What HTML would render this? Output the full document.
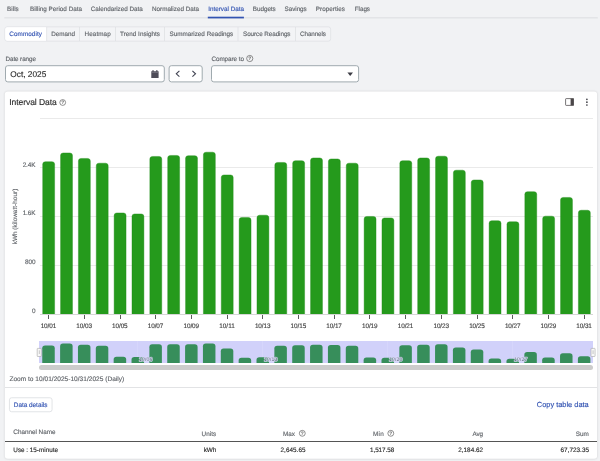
<!DOCTYPE html>
<html><head><meta charset="utf-8"><title>Interval Data</title>
<style>
html,body{margin:0;padding:0;}
body{text-rendering:geometricPrecision;width:600px;height:461px;overflow:hidden;background:#f1f2f4;position:relative;font-family:"Liberation Sans",sans-serif;}
.a{position:absolute;display:block;}
</style></head><body>
<svg class="a" style="left:0;top:0" width="600" height="22" viewBox="0 0 600 22"><rect x="4.3" y="17.1" width="593.5" height="1.4" fill="#e2e3e6"/><rect x="207.8" y="16.7" width="36.1" height="1.7" fill="#3253b2"/></svg>
<svg class="a" style="left:0;top:0" width="600" height="50" viewBox="0 0 600 50"><rect x="4.85" y="26.85" width="325.8" height="14.3" rx="2.3" fill="#f3f4f6" stroke="#dcdee2" stroke-width="0.7"/><path d="M46.75 27.2 H7.2 a2 2 0 0 0 -2 2 V38.8 a2 2 0 0 0 2 2 H46.75 z" fill="#fff"/><rect x="46.40" y="27.0" width="0.7" height="14.0" fill="#dcdee2"/><rect x="79.15" y="27.0" width="0.7" height="14.0" fill="#dcdee2"/><rect x="115.15" y="27.0" width="0.7" height="14.0" fill="#dcdee2"/><rect x="164.15" y="27.0" width="0.7" height="14.0" fill="#dcdee2"/><rect x="237.65" y="27.0" width="0.7" height="14.0" fill="#dcdee2"/><rect x="295.15" y="27.0" width="0.7" height="14.0" fill="#dcdee2"/></svg>
<svg class="a" style="left:0;top:0" width="600" height="90" viewBox="0 0 600 90"><rect x="5.50" y="65.70" width="158.80" height="16.20" rx="2.3" fill="#fff" stroke="#a0aaaf" stroke-width="1.0"/></svg>
<svg class="a" style="left:151.3px;top:69.5px" width="7.9" height="8.6" viewBox="0 0 8 8.6" preserveAspectRatio="none"><path d="M0.3 1.2 h7.4 v6.9 a0.4 0.4 0 0 1 -0.4 0.4 h-6.6 a0.4 0.4 0 0 1 -0.4 -0.4 z" fill="#4e4c58"/><rect x="1.5" y="0" width="1.1" height="2" fill="#4e4c58"/><rect x="5.4" y="0" width="1.1" height="2" fill="#4e4c58"/><rect x="0.3" y="2.4" width="7.4" height="0.5" fill="#8e8c98"/></svg>
<svg class="a" style="left:0;top:0" width="600" height="90" viewBox="0 0 600 90"><rect x="169.10" y="65.70" width="33.10" height="16.20" rx="2.3" fill="#fff" stroke="#a0aaaf" stroke-width="1.0"/></svg>
<svg class="a" style="left:174px;top:69px" width="24" height="10" viewBox="0 0 24 10"><path d="M5.4 1.9 L2.3 4.8 L5.4 7.7" fill="none" stroke="#3e4150" stroke-width="1.1"/><path d="M18.4 1.9 L21.5 4.8 L18.4 7.7" fill="none" stroke="#3e4150" stroke-width="1.1"/></svg>
<svg class="a" style="left:0;top:0" width="600" height="90" viewBox="0 0 600 90"><rect x="211.50" y="65.70" width="147.10" height="16.20" rx="2.3" fill="#fff" stroke="#a0aaaf" stroke-width="1.0"/></svg>
<svg class="a" style="left:347.2px;top:71.8px" width="6.4" height="4.4" viewBox="0 0 6.4 4.4"><path d="M0.4 0.4 h5.6 l-2.8 3.5 z" fill="#3c3c44"/></svg>
<svg class="a" style="left:0;top:0" width="600" height="461" viewBox="0 0 600 461"><defs><filter id="sh" x="-5%" y="-5%" width="110%" height="110%"><feGaussianBlur stdDeviation="1.3"/></filter></defs><rect x="4.8" y="91.6" width="592.3" height="367.3" rx="3" fill="#000" opacity="0.14" filter="url(#sh)"/><rect x="4.8" y="91.5" width="592.3" height="367.3" rx="3" fill="#fff"/></svg>
<svg class="a" style="left:565px;top:98px" width="9.4" height="8" viewBox="0 0 9.4 8"><rect x="0.6" y="0.6" width="8.2" height="6.8" rx="0.6" fill="none" stroke="#4a4648" stroke-width="0.75"/><rect x="5.6" y="0.6" width="3.2" height="6.8" fill="#4a4648"/></svg>
<svg class="a" style="left:580px;top:95px" width="14" height="14" viewBox="580 95 14 14"><circle cx="586.9" cy="99.3" r="0.85" fill="#3f3f46"/><circle cx="586.9" cy="102.15" r="0.85" fill="#3f3f46"/><circle cx="586.9" cy="105.0" r="0.85" fill="#3f3f46"/></svg>
<div class="a" style="left:39.6px;top:313.80px;width:553.60px;height:0.8px;background:#d6d6d6"></div>
<div class="a" style="left:39.6px;top:264.87px;width:553.60px;height:0.8px;background:#eaeaea"></div>
<div class="a" style="left:39.6px;top:215.94px;width:553.60px;height:0.8px;background:#eaeaea"></div>
<div class="a" style="left:39.6px;top:167.01px;width:553.60px;height:0.8px;background:#eaeaea"></div>
<div class="a" style="left:39.6px;top:118.08px;width:553.60px;height:0.8px;background:#eaeaea"></div>
<svg class="a" style="left:0;top:0" width="600" height="314.20" viewBox="0 0 600 314.20"><rect x="42.70" y="161.70" width="11.9" height="154.95" rx="2.6" fill="#259a1c" stroke="#1f8a17" stroke-width="0.4"/><rect x="60.56" y="152.95" width="11.9" height="163.70" rx="2.6" fill="#259a1c" stroke="#1f8a17" stroke-width="0.4"/><rect x="78.41" y="158.45" width="11.9" height="158.20" rx="2.6" fill="#259a1c" stroke="#1f8a17" stroke-width="0.4"/><rect x="96.27" y="163.20" width="11.9" height="153.45" rx="2.6" fill="#259a1c" stroke="#1f8a17" stroke-width="0.4"/><rect x="114.13" y="212.95" width="11.9" height="103.70" rx="2.6" fill="#259a1c" stroke="#1f8a17" stroke-width="0.4"/><rect x="131.99" y="213.95" width="11.9" height="102.70" rx="2.6" fill="#259a1c" stroke="#1f8a17" stroke-width="0.4"/><rect x="149.84" y="156.45" width="11.9" height="160.20" rx="2.6" fill="#259a1c" stroke="#1f8a17" stroke-width="0.4"/><rect x="167.70" y="155.45" width="11.9" height="161.20" rx="2.6" fill="#259a1c" stroke="#1f8a17" stroke-width="0.4"/><rect x="185.56" y="155.70" width="11.9" height="160.95" rx="2.6" fill="#259a1c" stroke="#1f8a17" stroke-width="0.4"/><rect x="203.41" y="152.20" width="11.9" height="164.45" rx="2.6" fill="#259a1c" stroke="#1f8a17" stroke-width="0.4"/><rect x="221.27" y="174.95" width="11.9" height="141.70" rx="2.6" fill="#259a1c" stroke="#1f8a17" stroke-width="0.4"/><rect x="239.13" y="217.45" width="11.9" height="99.20" rx="2.6" fill="#259a1c" stroke="#1f8a17" stroke-width="0.4"/><rect x="256.98" y="215.20" width="11.9" height="101.45" rx="2.6" fill="#259a1c" stroke="#1f8a17" stroke-width="0.4"/><rect x="274.84" y="162.45" width="11.9" height="154.20" rx="2.6" fill="#259a1c" stroke="#1f8a17" stroke-width="0.4"/><rect x="292.70" y="160.70" width="11.9" height="155.95" rx="2.6" fill="#259a1c" stroke="#1f8a17" stroke-width="0.4"/><rect x="310.56" y="157.95" width="11.9" height="158.70" rx="2.6" fill="#259a1c" stroke="#1f8a17" stroke-width="0.4"/><rect x="328.41" y="158.95" width="11.9" height="157.70" rx="2.6" fill="#259a1c" stroke="#1f8a17" stroke-width="0.4"/><rect x="346.27" y="163.20" width="11.9" height="153.45" rx="2.6" fill="#259a1c" stroke="#1f8a17" stroke-width="0.4"/><rect x="364.13" y="216.45" width="11.9" height="100.20" rx="2.6" fill="#259a1c" stroke="#1f8a17" stroke-width="0.4"/><rect x="381.98" y="217.95" width="11.9" height="98.70" rx="2.6" fill="#259a1c" stroke="#1f8a17" stroke-width="0.4"/><rect x="399.84" y="160.70" width="11.9" height="155.95" rx="2.6" fill="#259a1c" stroke="#1f8a17" stroke-width="0.4"/><rect x="417.70" y="157.95" width="11.9" height="158.70" rx="2.6" fill="#259a1c" stroke="#1f8a17" stroke-width="0.4"/><rect x="435.55" y="156.20" width="11.9" height="160.45" rx="2.6" fill="#259a1c" stroke="#1f8a17" stroke-width="0.4"/><rect x="453.41" y="170.20" width="11.9" height="146.45" rx="2.6" fill="#259a1c" stroke="#1f8a17" stroke-width="0.4"/><rect x="471.27" y="179.95" width="11.9" height="136.70" rx="2.6" fill="#259a1c" stroke="#1f8a17" stroke-width="0.4"/><rect x="489.12" y="220.70" width="11.9" height="95.95" rx="2.6" fill="#259a1c" stroke="#1f8a17" stroke-width="0.4"/><rect x="506.98" y="221.75" width="11.9" height="94.90" rx="2.6" fill="#259a1c" stroke="#1f8a17" stroke-width="0.4"/><rect x="524.84" y="191.65" width="11.9" height="125.00" rx="2.6" fill="#259a1c" stroke="#1f8a17" stroke-width="0.4"/><rect x="542.70" y="216.15" width="11.9" height="100.50" rx="2.6" fill="#259a1c" stroke="#1f8a17" stroke-width="0.4"/><rect x="560.55" y="197.45" width="11.9" height="119.20" rx="2.6" fill="#259a1c" stroke="#1f8a17" stroke-width="0.4"/><rect x="578.41" y="210.25" width="11.9" height="106.40" rx="2.6" fill="#259a1c" stroke="#1f8a17" stroke-width="0.4"/></svg>
<div class="a" style="left:48.10px;top:315px;width:0.8px;height:4.2px;background:#5c5c5c"></div>
<div class="a" style="left:83.81px;top:315px;width:0.8px;height:4.2px;background:#5c5c5c"></div>
<div class="a" style="left:119.52px;top:315px;width:0.8px;height:4.2px;background:#5c5c5c"></div>
<div class="a" style="left:155.23px;top:315px;width:0.8px;height:4.2px;background:#5c5c5c"></div>
<div class="a" style="left:190.94px;top:315px;width:0.8px;height:4.2px;background:#5c5c5c"></div>
<div class="a" style="left:226.65px;top:315px;width:0.8px;height:4.2px;background:#5c5c5c"></div>
<div class="a" style="left:262.36px;top:315px;width:0.8px;height:4.2px;background:#5c5c5c"></div>
<div class="a" style="left:298.07px;top:315px;width:0.8px;height:4.2px;background:#5c5c5c"></div>
<div class="a" style="left:333.78px;top:315px;width:0.8px;height:4.2px;background:#5c5c5c"></div>
<div class="a" style="left:369.49px;top:315px;width:0.8px;height:4.2px;background:#5c5c5c"></div>
<div class="a" style="left:405.20px;top:315px;width:0.8px;height:4.2px;background:#5c5c5c"></div>
<div class="a" style="left:440.91px;top:315px;width:0.8px;height:4.2px;background:#5c5c5c"></div>
<div class="a" style="left:476.62px;top:315px;width:0.8px;height:4.2px;background:#5c5c5c"></div>
<div class="a" style="left:512.33px;top:315px;width:0.8px;height:4.2px;background:#5c5c5c"></div>
<div class="a" style="left:548.04px;top:315px;width:0.8px;height:4.2px;background:#5c5c5c"></div>
<div class="a" style="left:583.75px;top:315px;width:0.8px;height:4.2px;background:#5c5c5c"></div>
<div class="a" style="left:39.2px;top:341px;width:553.60px;height:22px;background:#d1d1fa"></div>
<svg class="a" style="left:0;top:0" width="600" height="363" viewBox="0 0 600 363"><rect x="137.47" y="341" width="0.5" height="22" fill="#dadafc"/><rect x="262.46" y="341" width="0.5" height="22" fill="#dadafc"/><rect x="387.44" y="341" width="0.5" height="22" fill="#dadafc"/><rect x="512.43" y="341" width="0.5" height="22" fill="#dadafc"/><rect x="42.25" y="345.52" width="12.5" height="20.48" rx="2.8" fill="#378e5b"/><rect x="60.11" y="343.60" width="12.5" height="22.40" rx="2.8" fill="#378e5b"/><rect x="77.96" y="344.81" width="12.5" height="21.19" rx="2.8" fill="#378e5b"/><rect x="95.81" y="345.85" width="12.5" height="20.15" rx="2.8" fill="#378e5b"/><rect x="113.67" y="356.77" width="12.5" height="9.23" rx="2.8" fill="#378e5b"/><rect x="131.53" y="356.99" width="12.5" height="9.01" rx="2.8" fill="#378e5b"/><rect x="149.38" y="344.37" width="12.5" height="21.63" rx="2.8" fill="#378e5b"/><rect x="167.24" y="344.15" width="12.5" height="21.85" rx="2.8" fill="#378e5b"/><rect x="185.09" y="344.20" width="12.5" height="21.80" rx="2.8" fill="#378e5b"/><rect x="202.94" y="343.43" width="12.5" height="22.57" rx="2.8" fill="#378e5b"/><rect x="220.80" y="348.43" width="12.5" height="17.57" rx="2.8" fill="#378e5b"/><rect x="238.66" y="357.76" width="12.5" height="8.24" rx="2.8" fill="#378e5b"/><rect x="256.51" y="357.26" width="12.5" height="8.74" rx="2.8" fill="#378e5b"/><rect x="274.37" y="345.68" width="12.5" height="20.32" rx="2.8" fill="#378e5b"/><rect x="292.22" y="345.30" width="12.5" height="20.70" rx="2.8" fill="#378e5b"/><rect x="310.07" y="344.70" width="12.5" height="21.30" rx="2.8" fill="#378e5b"/><rect x="327.93" y="344.92" width="12.5" height="21.08" rx="2.8" fill="#378e5b"/><rect x="345.79" y="345.85" width="12.5" height="20.15" rx="2.8" fill="#378e5b"/><rect x="363.64" y="357.54" width="12.5" height="8.46" rx="2.8" fill="#378e5b"/><rect x="381.50" y="357.87" width="12.5" height="8.13" rx="2.8" fill="#378e5b"/><rect x="399.35" y="345.30" width="12.5" height="20.70" rx="2.8" fill="#378e5b"/><rect x="417.20" y="344.70" width="12.5" height="21.30" rx="2.8" fill="#378e5b"/><rect x="435.06" y="344.31" width="12.5" height="21.69" rx="2.8" fill="#378e5b"/><rect x="452.92" y="347.38" width="12.5" height="18.62" rx="2.8" fill="#378e5b"/><rect x="470.77" y="349.52" width="12.5" height="16.48" rx="2.8" fill="#378e5b"/><rect x="488.62" y="358.47" width="12.5" height="7.53" rx="2.8" fill="#378e5b"/><rect x="506.48" y="358.70" width="12.5" height="7.30" rx="2.8" fill="#378e5b"/><rect x="524.34" y="352.09" width="12.5" height="13.91" rx="2.8" fill="#378e5b"/><rect x="542.19" y="357.47" width="12.5" height="8.53" rx="2.8" fill="#378e5b"/><rect x="560.04" y="353.37" width="12.5" height="12.63" rx="2.8" fill="#378e5b"/><rect x="577.90" y="356.18" width="12.5" height="9.82" rx="2.8" fill="#378e5b"/></svg>
<div class="a" style="left:39.2px;top:365px;width:553.60px;height:5px;border-radius:2.5px;background:#cccccc"></div>
<svg class="a" style="left:0;top:0" width="600" height="360" viewBox="0 0 600 360"><rect x="37.20" y="348.4" width="4.1" height="8.1" rx="0.5" fill="#f8f8f8" stroke="#a6a6a6" stroke-width="0.6"/><rect x="38.85" y="350.3" width="0.8" height="3.7" fill="#b8b8b8"/><rect x="591.00" y="348.4" width="4.1" height="8.1" rx="0.5" fill="#f8f8f8" stroke="#a6a6a6" stroke-width="0.6"/><rect x="592.65" y="350.3" width="0.8" height="3.7" fill="#b8b8b8"/></svg>
<div class="a" style="left:5px;top:387.3px;width:592px;height:0.8px;background:#e2e3e5"></div>
<svg class="a" style="left:0;top:390px" width="100" height="30" viewBox="0 390 100 30"><rect x="9.45" y="397.75" width="42.6" height="14" rx="2.2" fill="#fff" stroke="#d6d9dd" stroke-width="0.7"/></svg>
<div class="a" style="left:5px;top:441px;width:592px;height:1px;background:#555"></div>
<svg class="a" style="left:0;top:0;will-change:transform" width="600" height="461" viewBox="0 0 600 461" font-family="Liberation Sans, sans-serif" text-rendering="geometricPrecision" stroke-width="0.14">
<text x="7.00" y="11.10" font-size="6.32" fill="#5f6368" stroke="#5f6368" textLength="11.75" lengthAdjust="spacing">Bills</text>
<text x="30.00" y="11.10" font-size="6.32" fill="#5f6368" stroke="#5f6368" textLength="52.00" lengthAdjust="spacing">Billing Period Data</text>
<text x="90.75" y="11.10" font-size="6.32" fill="#5f6368" stroke="#5f6368" textLength="52.00" lengthAdjust="spacing">Calendarized Data</text>
<text x="152.00" y="11.10" font-size="6.32" fill="#5f6368" stroke="#5f6368" textLength="47.00" lengthAdjust="spacing">Normalized Data</text>
<text x="208.20" y="11.10" font-size="6.32" fill="#3253b2" stroke="#3253b2" textLength="35.80" lengthAdjust="spacing">Interval Data</text>
<text x="252.75" y="11.10" font-size="6.32" fill="#5f6368" stroke="#5f6368" textLength="23.00" lengthAdjust="spacing">Budgets</text>
<text x="284.50" y="11.10" font-size="6.32" fill="#5f6368" stroke="#5f6368" textLength="22.25" lengthAdjust="spacing">Savings</text>
<text x="315.75" y="11.10" font-size="6.32" fill="#5f6368" stroke="#5f6368" textLength="29.25" lengthAdjust="spacing">Properties</text>
<text x="354.75" y="11.10" font-size="6.32" fill="#5f6368" stroke="#5f6368" textLength="15.25" lengthAdjust="spacing">Flags</text>
<text x="9.25" y="36.20" font-size="6.32" fill="#3253b2" stroke="#3253b2" textLength="32.75" lengthAdjust="spacing">Commodity</text>
<text x="51.25" y="36.20" font-size="6.32" fill="#5f6368" stroke="#5f6368" textLength="23.75" lengthAdjust="spacing">Demand</text>
<text x="84.50" y="36.20" font-size="6.32" fill="#5f6368" stroke="#5f6368" textLength="26.25" lengthAdjust="spacing">Heatmap</text>
<text x="120.00" y="36.20" font-size="6.32" fill="#5f6368" stroke="#5f6368" textLength="40.00" lengthAdjust="spacing">Trend Insights</text>
<text x="169.50" y="36.20" font-size="6.32" fill="#5f6368" stroke="#5f6368" textLength="63.75" lengthAdjust="spacing">Summarized Readings</text>
<text x="243.00" y="36.20" font-size="6.32" fill="#5f6368" stroke="#5f6368" textLength="47.50" lengthAdjust="spacing">Source Readings</text>
<text x="300.00" y="36.20" font-size="6.32" fill="#5f6368" stroke="#5f6368" textLength="26.00" lengthAdjust="spacing">Channels</text>
<text x="5.50" y="61.00" font-size="6.30" fill="#5f6368" stroke="#5f6368" textLength="30.40" lengthAdjust="spacing">Date range</text>
<text x="10.30" y="76.60" font-size="8.30" fill="#2b2b2b" stroke="#2b2b2b">Oct, 2025</text>
<text x="211.40" y="61.00" font-size="6.30" fill="#5f6368" stroke="#5f6368" textLength="32.60" lengthAdjust="spacing">Compare to</text>
<circle cx="249.75" cy="58.50" r="3.10" fill="none" stroke="#6b6b6b" stroke-width="0.75"/><text x="249.75" y="60.25" font-size="4.9" font-weight="bold" fill="#6b6b6b" stroke="none" text-anchor="middle">?</text>
<text x="9.30" y="105.20" font-size="8.55" fill="#2b2b2b" stroke="#2b2b2b" textLength="47.40" lengthAdjust="spacing">Interval Data</text>
<circle cx="62.70" cy="102.50" r="2.90" fill="none" stroke="#6b6b6b" stroke-width="0.75"/><text x="62.70" y="104.25" font-size="4.9" font-weight="bold" fill="#6b6b6b" stroke="none" text-anchor="middle">?</text>
<text x="32.02" y="313.00" font-size="6.40" fill="#5f6368" stroke="#5f6368">0</text>
<text x="25.07" y="264.00" font-size="6.40" fill="#5f6368" stroke="#5f6368" textLength="10.43" lengthAdjust="spacing">800</text>
<text x="22.64" y="215.00" font-size="6.40" fill="#5f6368" stroke="#5f6368" textLength="12.86" lengthAdjust="spacing">1.6K</text>
<text x="22.64" y="167.00" font-size="6.40" fill="#5f6368" stroke="#5f6368" textLength="12.86" lengthAdjust="spacing">2.4K</text>
<text x="40.65" y="328.00" font-size="6.40" fill="#444" stroke="#444" textLength="15.60" lengthAdjust="spacing">10/01</text>
<text x="76.36" y="328.00" font-size="6.40" fill="#444" stroke="#444" textLength="15.60" lengthAdjust="spacing">10/03</text>
<text x="112.07" y="328.00" font-size="6.40" fill="#444" stroke="#444" textLength="15.60" lengthAdjust="spacing">10/05</text>
<text x="147.78" y="328.00" font-size="6.40" fill="#444" stroke="#444" textLength="15.60" lengthAdjust="spacing">10/07</text>
<text x="183.49" y="328.00" font-size="6.40" fill="#444" stroke="#444" textLength="15.60" lengthAdjust="spacing">10/09</text>
<text x="219.20" y="328.00" font-size="6.40" fill="#444" stroke="#444" textLength="15.60" lengthAdjust="spacing">10/11</text>
<text x="254.91" y="328.00" font-size="6.40" fill="#444" stroke="#444" textLength="15.60" lengthAdjust="spacing">10/13</text>
<text x="290.62" y="328.00" font-size="6.40" fill="#444" stroke="#444" textLength="15.60" lengthAdjust="spacing">10/15</text>
<text x="326.33" y="328.00" font-size="6.40" fill="#444" stroke="#444" textLength="15.60" lengthAdjust="spacing">10/17</text>
<text x="362.04" y="328.00" font-size="6.40" fill="#444" stroke="#444" textLength="15.60" lengthAdjust="spacing">10/19</text>
<text x="397.75" y="328.00" font-size="6.40" fill="#444" stroke="#444" textLength="15.60" lengthAdjust="spacing">10/21</text>
<text x="433.46" y="328.00" font-size="6.40" fill="#444" stroke="#444" textLength="15.60" lengthAdjust="spacing">10/23</text>
<text x="469.17" y="328.00" font-size="6.40" fill="#444" stroke="#444" textLength="15.60" lengthAdjust="spacing">10/25</text>
<text x="504.88" y="328.00" font-size="6.40" fill="#444" stroke="#444" textLength="15.60" lengthAdjust="spacing">10/27</text>
<text x="540.59" y="328.00" font-size="6.40" fill="#444" stroke="#444" textLength="15.60" lengthAdjust="spacing">10/29</text>
<text x="576.30" y="328.00" font-size="6.40" fill="#444" stroke="#444" textLength="15.60" lengthAdjust="spacing">10/31</text>
<text x="0" y="0" font-size="6.3" fill="#5f6368" stroke="#5f6368" text-anchor="middle" textLength="55.6" lengthAdjust="spacing" transform="translate(17.3,216.5) rotate(-90)">kWh (kilowatt-hour)</text>
<text x="139.12" y="361.3" font-size="5.2" textLength="13.2" lengthAdjust="spacing" fill="#5a5f74" stroke="#dedefa" stroke-width="1.3" stroke-linejoin="round" paint-order="stroke" opacity="0.9">10/06</text>
<text x="264.11" y="361.3" font-size="5.2" textLength="13.2" lengthAdjust="spacing" fill="#5a5f74" stroke="#dedefa" stroke-width="1.3" stroke-linejoin="round" paint-order="stroke" opacity="0.9">10/13</text>
<text x="389.09" y="361.3" font-size="5.2" textLength="13.2" lengthAdjust="spacing" fill="#5a5f74" stroke="#dedefa" stroke-width="1.3" stroke-linejoin="round" paint-order="stroke" opacity="0.9">10/20</text>
<text x="514.08" y="361.3" font-size="5.2" textLength="13.2" lengthAdjust="spacing" fill="#5a5f74" stroke="#dedefa" stroke-width="1.3" stroke-linejoin="round" paint-order="stroke" opacity="0.9">10/27</text>
<text x="9.40" y="381.00" font-size="6.59" fill="#5f6368" stroke="#5f6368">Zoom to 10/01/2025-10/31/2025 (Daily)</text>
<text x="13.80" y="406.70" font-size="6.38" fill="#3253b2" stroke="#3253b2">Data details</text>
<text x="536.80" y="407.20" font-size="7.42" fill="#3253b2" stroke="#3253b2">Copy table data</text>
<text x="13.30" y="433.80" font-size="6.35" fill="#5f6368" stroke="#5f6368" textLength="42.20" lengthAdjust="spacing">Channel Name</text>
<text x="201.50" y="435.50" font-size="6.35" fill="#5f6368" stroke="#5f6368" textLength="14.70" lengthAdjust="spacing">Units</text>
<text x="283.00" y="435.50" font-size="6.35" fill="#5f6368" stroke="#5f6368" textLength="12.00" lengthAdjust="spacing">Max</text>
<circle cx="302.30" cy="433.30" r="2.95" fill="none" stroke="#6b6b6b" stroke-width="0.75"/><text x="302.30" y="435.05" font-size="4.9" font-weight="bold" fill="#6b6b6b" stroke="none" text-anchor="middle">?</text>
<text x="373.00" y="435.50" font-size="6.35" fill="#5f6368" stroke="#5f6368" textLength="10.80" lengthAdjust="spacing">Min</text>
<circle cx="390.80" cy="433.30" r="2.95" fill="none" stroke="#6b6b6b" stroke-width="0.75"/><text x="390.80" y="435.05" font-size="4.9" font-weight="bold" fill="#6b6b6b" stroke="none" text-anchor="middle">?</text>
<text x="472.50" y="435.50" font-size="6.35" fill="#5f6368" stroke="#5f6368" textLength="10.50" lengthAdjust="spacing">Avg</text>
<text x="575.80" y="435.50" font-size="6.35" fill="#5f6368" stroke="#5f6368" textLength="13.00" lengthAdjust="spacing">Sum</text>
<text x="13.30" y="452.00" font-size="6.35" fill="#2b2b2b" stroke="#2b2b2b" textLength="44.70" lengthAdjust="spacing">Use : 15-minute</text>
<text x="203.80" y="452.00" font-size="6.35" fill="#2b2b2b" stroke="#2b2b2b" textLength="12.40" lengthAdjust="spacing">kWh</text>
<text x="280.50" y="452.00" font-size="6.35" fill="#2b2b2b" stroke="#2b2b2b" textLength="25.00" lengthAdjust="spacing">2,645.65</text>
<text x="370.00" y="452.00" font-size="6.35" fill="#2b2b2b" stroke="#2b2b2b" textLength="24.20" lengthAdjust="spacing">1,517.58</text>
<text x="458.30" y="452.00" font-size="6.35" fill="#2b2b2b" stroke="#2b2b2b" textLength="24.70" lengthAdjust="spacing">2,184.62</text>
<text x="560.50" y="452.00" font-size="6.35" fill="#2b2b2b" stroke="#2b2b2b" textLength="28.50" lengthAdjust="spacing">67,723.35</text>
</svg>
</body></html>
